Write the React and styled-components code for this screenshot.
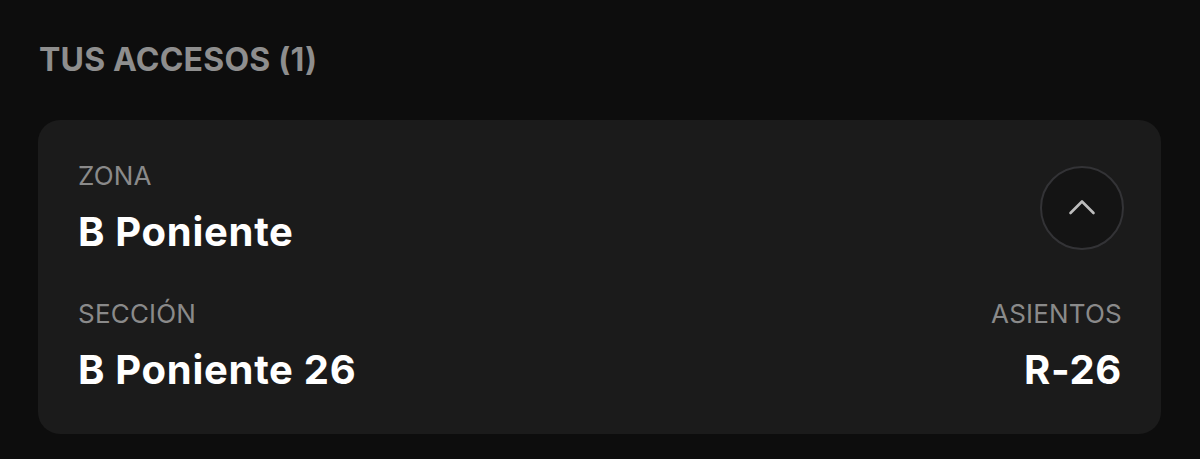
import styled, { createGlobalStyle } from 'styled-components';

const GlobalStyle = createGlobalStyle`
  html, body {
    margin: 0;
    padding: 0;
    background: #0d0d0d;
  }
  body {
    font-family: Inter, "Noto Sans", "Liberation Sans", sans-serif;
    -webkit-font-smoothing: antialiased;
  }
`;

const ChevronUp = () => (
  <svg width="28" height="16" viewBox="0 0 28 16" fill="none">
    <path
      d="M2.5 14 L14 2.5 L25.5 14"
      stroke="#bdbdbd"
      strokeWidth="2.6"
      strokeLinecap="round"
      strokeLinejoin="round"
    />
  </svg>
);

const App = () => {
  return (
    <>
      <GlobalStyle />
      <Page>
        <Heading>TUS ACCESOS (1)</Heading>
        <Card>
          <Row>
            <Field>
              <Label>ZONA</Label>
              <Value>B Poniente</Value>
            </Field>
            <ToggleButton aria-label="Contraer">
              <ChevronUp />
            </ToggleButton>
          </Row>
          <Row $bottom>
            <Field>
              <Label>SECCIÓN</Label>
              <Value>B Poniente 26</Value>
            </Field>
            <Field $right>
              <Label>ASIENTOS</Label>
              <Value>R-26</Value>
            </Field>
          </Row>
        </Card>
      </Page>
    </>
  );
};

const Page = styled.div`
  width: 1200px;
  height: 459px;
  box-sizing: border-box;
  padding: 40px 39px 0 38px;
  display: flex;
  flex-direction: column;
`;

const Heading = styled.h2`
  margin: 0 0 0 1px;
  font-size: 32px;
  line-height: 40px;
  font-weight: 700;
  color: #8e8e8e;
  letter-spacing: 0.2px;
`;

const Card = styled.div`
  margin-top: 40px;
  background: #1b1b1b;
  border-radius: 22px;
  padding: 40px 39px 40px 40px;
  display: flex;
  flex-direction: column;
  gap: 42px;
`;

const Row = styled.div`
  display: flex;
  justify-content: space-between;
  align-items: ${(p) => (p.$bottom ? 'flex-start' : 'center')};
`;

const Field = styled.div`
  display: flex;
  flex-direction: column;
  align-items: ${(p) => (p.$right ? 'flex-end' : 'flex-start')};
  gap: 16px;
`;

const Label = styled.span`
  font-size: 26px;
  line-height: 32px;
  font-weight: 400;
  color: #8a8a8a;
  letter-spacing: 0.2px;
`;

const Value = styled.span`
  font-size: 40px;
  line-height: 48px;
  font-weight: 700;
  color: #ffffff;
  letter-spacing: 0.7px;
`;

const ToggleButton = styled.button`
  width: 84px;
  height: 84px;
  border-radius: 50%;
  border: 2px solid #333336;
  background: #141414;
  display: flex;
  align-items: center;
  justify-content: center;
  padding: 0 0 2px;
  margin-right: -2px;
  cursor: pointer;
`;

export default App;
